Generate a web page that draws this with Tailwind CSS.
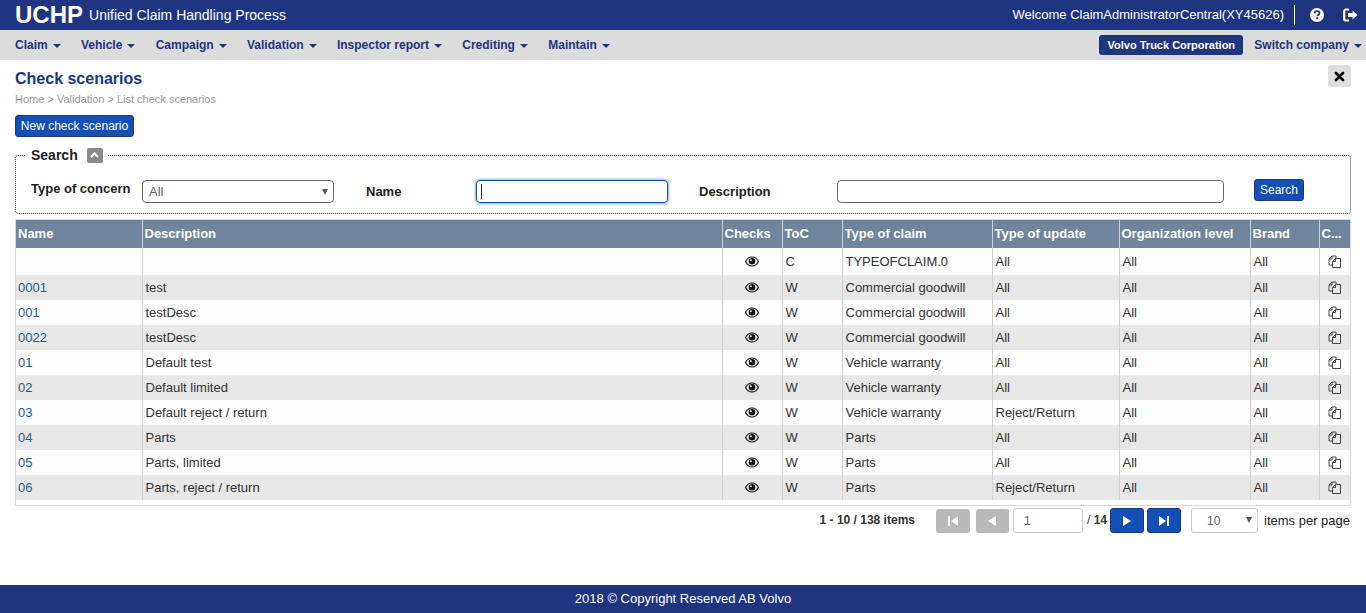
<!DOCTYPE html>
<html lang="en">
<head>
  <meta charset="UTF-8" />
  <meta name="viewport" content="width=device-width, initial-scale=1" />
  <title>UCHP - Check scenarios</title>
  <script src="https://cdn.jsdelivr.net/npm/@tailwindcss/browser@4"></script>
</head>
<body class="bg-white text-[#222] font-['Liberation_Sans',Arial,sans-serif] h-screen flex flex-col overflow-hidden">

  <!-- TOP BAR -->
  <header class="h-[30px] bg-[#1f3580] text-white flex items-center pl-[15px] pr-[8px] shrink-0">
    <span class="text-[24px] font-bold leading-none">UCHP</span>
    <span class="text-sm ml-[6px]">Unified Claim Handling Process</span>
    <span class="text-[13px] ml-auto">Welcome ClaimAdministratorCentral(XY45626)</span>
    <span class="w-px h-5 bg-white ml-[10px]"></span>
    <svg class="ml-[15px]" width="14" height="14" viewBox="0 0 14 14"><circle cx="7" cy="7" r="7" fill="#fff"/><path d="M4.6 5.400C4.700 4 5.800 3.200 7.100 3.200c1.400 0 2.400.9 2.400 2 0 1.800-2.200 1.700-2.200 3.100" fill="none" stroke="#1f3580" stroke-width="1.800"/><rect x="6.200" y="9.300" width="2.100" height="2" fill="#1f3580"/></svg>
    <svg class="ml-[19px]" width="15" height="14" viewBox="0 0 15 14"><path d="M6 1.500H3A1.800 1.800 0 0 0 1.200 3.300v7.400A1.800 1.800 0 0 0 3 12.500h3" fill="none" stroke="#fff" stroke-width="2.200"/><path d="M9.500 2.500 14.500 7l-5 4.500V9H5V5h4.500z" fill="#fff"/></svg>
  </header>

  <!-- MENU -->
  <nav class="h-[30px] bg-[#dcdcdc] text-[#1f3580] text-xs font-bold flex items-center pl-[15px] pr-[4px] shrink-0">
    <div class="flex gap-[20.300px]">
      <a class="flex items-center">Claim<i class="ml-[5px] mt-px border-x-[4px] border-x-transparent border-t-[4px] border-t-[#1f3580]"></i></a>
      <a class="flex items-center">Vehicle<i class="ml-[5px] mt-px border-x-[4px] border-x-transparent border-t-[4px] border-t-[#1f3580]"></i></a>
      <a class="flex items-center">Campaign<i class="ml-[5px] mt-px border-x-[4px] border-x-transparent border-t-[4px] border-t-[#1f3580]"></i></a>
      <a class="flex items-center">Validation<i class="ml-[5px] mt-px border-x-[4px] border-x-transparent border-t-[4px] border-t-[#1f3580]"></i></a>
      <a class="flex items-center">Inspector report<i class="ml-[5px] mt-px border-x-[4px] border-x-transparent border-t-[4px] border-t-[#1f3580]"></i></a>
      <a class="flex items-center">Crediting<i class="ml-[5px] mt-px border-x-[4px] border-x-transparent border-t-[4px] border-t-[#1f3580]"></i></a>
      <a class="flex items-center">Maintain<i class="ml-[5px] mt-px border-x-[4px] border-x-transparent border-t-[4px] border-t-[#1f3580]"></i></a>
    </div>
    <span class="ml-auto h-5 w-[144px] justify-center bg-[#1f3580] text-white text-[11px] rounded-[3px] flex items-center">Volvo Truck Corporation</span>
    <a class="ml-[11px] flex items-center">Switch company<i class="ml-[5px] mt-px border-x-[4px] border-x-transparent border-t-[4px] border-t-[#1f3580]"></i></a>
  </nav>

  <main class="flex-1 px-[15px] min-h-0">
    <div class="flex justify-between items-start pt-[5px]">
      <div>
        <h1 class="text-base font-bold text-[#1f3580] leading-5 mt-[4px]">Check scenarios</h1>
        <p class="text-[11px] leading-4 text-[#999] mt-[2px]">Home &gt; Validation &gt; List check scenarios</p>
      </div>
      <button class="w-[23px] h-[22px] bg-[#dedede] rounded-[3px] flex items-center justify-center">
        <svg width="11" height="11" viewBox="0 0 11 11"><path d="M2 2l7 7M9 2l-7 7" stroke="#000" stroke-width="2.800" stroke-linecap="round"/></svg>
      </button>
    </div>

    <button class="mt-[8px] block h-[22px] w-[119px] bg-[#1450b4] border border-[#1f3580] rounded-[3px] text-white text-xs">New check scenario</button>

    <!-- SEARCH -->
    <fieldset class="mt-[10px] h-[67px] border border-dotted border-[#333] rounded-[3px] pl-[15px] pr-[46px]">
      <legend class="ml-[-5px] px-[5px] flex items-center gap-[5px] text-sm font-bold leading-4">Search
        <span class="w-[16px] h-[15px] bg-[#8a8a8a] rounded-[2px] flex items-center justify-center ml-[4px]">
          <svg width="9" height="6" viewBox="0 0 9 6"><path d="M1 5l3.500-3.500L8 5" fill="none" stroke="#fff" stroke-width="2"/></svg>
        </span>
      </legend>
      <div class="flex items-center mt-[17px] text-[13px] font-bold">
        <label class="w-[111px] -mt-[6px]">Type of concern</label>
        <div class="relative w-[192px] h-[23px] border border-[#666] rounded-[4px] font-normal text-[13px] text-[#666] pl-[6px] leading-[21px]">All
          <i class="absolute right-[5px] top-[8px] border-x-[3.500px] border-x-transparent border-t-[6px] border-t-[#555]"></i>
        </div>
        <label class="ml-[32px] w-[110px]">Name</label>
        <div class="relative w-[192px]">
          <input class="w-full h-[23px] block border border-[#1450b4] rounded-[4px] shadow-[0_0_3px_#1450b4] outline-none" />
          <span class="absolute left-[5px] top-[4px] w-px h-[15px] bg-[#222]"></span>
        </div>
        <label class="ml-[31px] w-[138px]">Description</label>
        <input class="w-[387px] h-[23px] block border border-[#666] rounded-[4px]" />
        <button class="ml-[30px] -mt-[3px] w-[50px] h-[22px] bg-[#1450b4] border border-[#1f3580] rounded-[3px] text-white text-xs font-normal">Search</button>
      </div>
    </fieldset>

    <!-- GRID -->
    <div class="mt-[5px] h-[287px] border border-[#d8d8d8]">
      <table class="w-full table-fixed border-collapse text-[13px] text-[#333]">
        <colgroup>
          <col class="w-[126px]"><col class="w-[580px]"><col class="w-[60px]"><col class="w-[60px]"><col class="w-[150px]"><col class="w-[127px]"><col class="w-[131px]"><col class="w-[69px]"><col>
        </colgroup>
        <thead>
          <tr class="h-[28px] bg-[#70859b] text-white text-[13px] font-bold text-left">
            <th class="px-[2px] font-bold">Name</th>
            <th class="px-[2px] font-bold border-l border-[#d0d0d0]">Description</th>
            <th class="px-[2px] font-bold border-l border-[#d0d0d0]">Checks</th>
            <th class="px-[2px] font-bold border-l border-[#d0d0d0]">ToC</th>
            <th class="px-[2px] font-bold border-l border-[#d0d0d0]">Type of claim</th>
            <th class="px-[2px] font-bold border-l border-[#d0d0d0]">Type of update</th>
            <th class="px-[2px] font-bold border-l border-[#d0d0d0]">Organization level</th>
            <th class="px-[2px] font-bold border-l border-[#d0d0d0]">Brand</th>
            <th class="px-[2px] font-bold border-l border-[#d0d0d0]">C...</th>
          </tr>
        </thead>
        <tbody id="rows"></tbody>
      </table>
    </div>

    <!-- PAGER -->
    <div class="flex items-center justify-end mt-[2px] mr-px h-[25px] text-xs">
      <span class="font-bold text-[#333] mr-[21px] -mt-[2px]">1 - 10 / 138 items</span>
      <button class="w-[34px] h-[24px] bg-[#b9b9b9] rounded-[3px] flex items-center justify-center"><svg width="12" height="12" viewBox="0 0 12 12"><path d="M1 1h2v10H1zM11 1v10L4 6z" fill="#fff"/></svg></button>
      <button class="ml-[6px] w-[33px] h-[24px] bg-[#b9b9b9] rounded-[3px] flex items-center justify-center"><svg width="12" height="12" viewBox="0 0 12 12"><path d="M10 1v10L2 6z" fill="#fff"/></svg></button>
      <div class="ml-[4px] w-[70px] h-[25px] border border-[#ccc] rounded-[3px] text-[#666] pl-[10px] leading-[24px]">1</div>
      <span class="ml-[4px] mr-[3px] -mt-[2px] text-[#333]">/ <b>14</b></span>
      <button class="w-[34px] h-[25px] bg-[#1450b4] border border-[#1f3580] rounded-[3px] flex items-center justify-center"><svg width="12" height="12" viewBox="0 0 12 12"><path d="M2 1v10l8-5z" fill="#fff"/></svg></button>
      <button class="ml-[3px] w-[34px] h-[25px] bg-[#1450b4] border border-[#1f3580] rounded-[3px] flex items-center justify-center"><svg width="12" height="12" viewBox="0 0 12 12"><path d="M1 1v10l7-5zM9 1h2v10H9z" fill="#fff"/></svg></button>
      <div class="relative ml-[10px] w-[67px] h-[25px] border border-[#ccc] rounded-[3px] text-[#666] pl-[15px] leading-[25px]">10
        <i class="absolute right-[5px] top-[8px] border-x-[3.500px] border-x-transparent border-t-[6px] border-t-[#555]"></i>
      </div>
      <span class="ml-[6px] text-[13px] text-[#222]">items per page</span>
    </div>
  </main>

  <footer class="h-[28px] bg-[#1f3580] text-white text-[13px] flex items-center justify-center shrink-0">2018 © Copyright Reserved AB Volvo</footer>

  <script>
    var data = [
      ['', '', 'C', 'TYPEOFCLAIM.0', 'All'],
      ['0001', 'test', 'W', 'Commercial goodwill', 'All'],
      ['001', 'testDesc', 'W', 'Commercial goodwill', 'All'],
      ['0022', 'testDesc', 'W', 'Commercial goodwill', 'All'],
      ['01', 'Default test', 'W', 'Vehicle warranty', 'All'],
      ['02', 'Default limited', 'W', 'Vehicle warranty', 'All'],
      ['03', 'Default reject / return', 'W', 'Vehicle warranty', 'Reject/Return'],
      ['04', 'Parts', 'W', 'Parts', 'All'],
      ['05', 'Parts, limited', 'W', 'Parts', 'All'],
      ['06', 'Parts, reject / return', 'W', 'Parts', 'Reject/Return']
    ];
    var eye = '<svg class="mx-auto" width="14" height="11" viewBox="0 0 14 11"><path d="M.5 5.500C2 2.500 4.300 1 7 1s5 1.500 6.500 4.500C12 8.500 9.700 10 7 10S2 8.500.5 5.500z" fill="none" stroke="#111" stroke-width="1.200"/><circle cx="7" cy="5.300" r="3.300" fill="#111"/><circle cx="5.800" cy="4.300" r="1" fill="#fff"/></svg>';
    var copy = '<svg class="mx-auto" width="13" height="13" viewBox="0 0 13 13" fill="none" stroke="#333" stroke-width=".9"><path d="M8 3V1H4L1 4v6h3.500"/><path d="M4 1v3H1"/><path d="M7.500 3.500h5v9h-8V6.500z" fill="none"/><path d="M7.500 3.500v3h-3"/></svg>';
    var td = 'px-[3px] border-l border-[#d0d0d0]';
    document.getElementById('rows').innerHTML = data.map(function (r, i) {
      return '<tr class="' + (i === 0 ? 'h-[27px] ' : 'h-[25px] ') + (i % 2 ? 'bg-[#e8e8e8]' : 'bg-[#fdfdfd]') + '">' +
        '<td class="px-[2px] text-[#2a5a8c]">' + r[0] + '</td>' +
        '<td class="' + td + '">' + r[1] + '</td>' +
        '<td class="' + td + '">' + eye + '</td>' +
        '<td class="' + td + '">' + r[2] + '</td>' +
        '<td class="' + td + '">' + r[3] + '</td>' +
        '<td class="' + td + '">' + r[4] + '</td>' +
        '<td class="' + td + '">All</td>' +
        '<td class="' + td + '">All</td>' +
        '<td class="' + td + '">' + copy + '</td></tr>';
    }).join('');
  </script>
</body>
</html>
